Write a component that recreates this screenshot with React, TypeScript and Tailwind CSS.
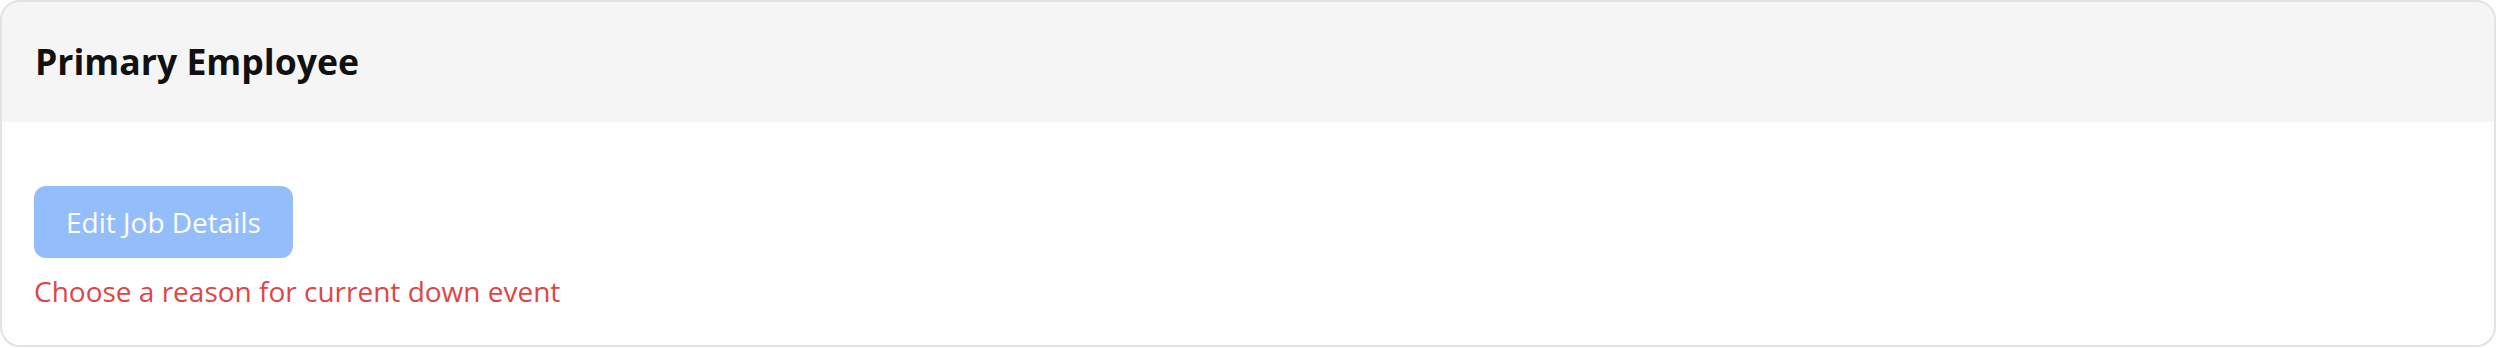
export default function App() {
  return (
    <div
      className="w-[2496px] h-[348px] bg-white"
      style={{ fontFamily: '"Open Sans", "Noto Sans", Arial, sans-serif' }}
    >
      <div className="h-[347px] rounded-[20px] border-2 border-[#e2e2e2] overflow-hidden bg-white flex flex-col">
        <div className="h-[120px] bg-[#f5f5f5] px-[33px] flex items-center">
          <h2 className="text-[35.6px] font-bold text-[#111111] leading-none">Primary Employee</h2>
        </div>
        <div className="px-[32px] pt-[64px]">
          <button className="h-[72px] px-[32px] rounded-[12px] bg-[#94bdfc] text-white text-[28px] leading-none">
            Edit Job Details
          </button>
          <p className="mt-[12px] text-[28px] leading-[43px] text-[#e04545]">
            Choose a reason for current down event
          </p>
        </div>
      </div>
    </div>
  )
}
